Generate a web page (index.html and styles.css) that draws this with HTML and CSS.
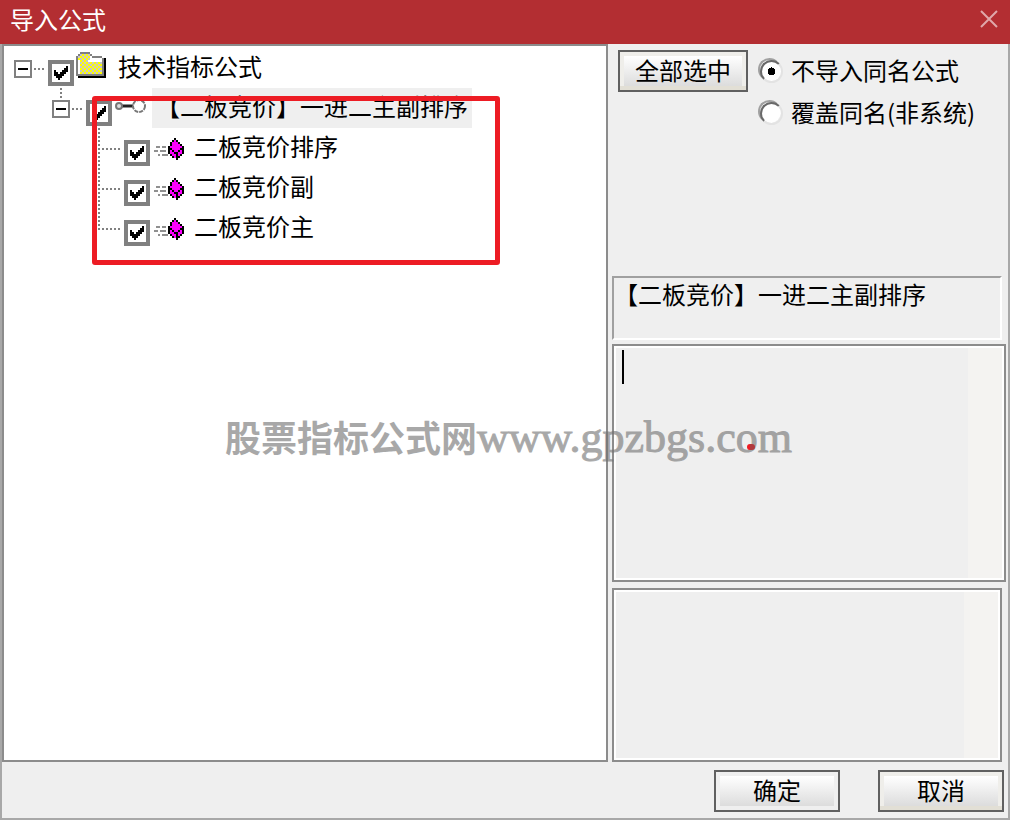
FILE: index.html
```html
<!DOCTYPE html>
<html lang="zh-CN">
<head>
<meta charset="utf-8">
<meta name="viewport" content="width=device-width, initial-scale=1.0">
<title>导入公式</title>
<link rel="stylesheet" href="styles.css">
</head>
<body>
<svg class="defs" width="0" height="0">
  <pattern id="dither" width="4" height="4" patternUnits="userSpaceOnUse">
    <path fill="#ffff00" d="M0 0h4v4H0z"/>
    <path fill="#c8c8c8" d="M0 0h2v2H0zM2 2h2v2H2z"/>
  </pattern>
  <symbol id="cube" viewBox="0 0 40 40">
    <path fill="#909090" d="M6 18h4v2H6zM12 18h4v2h-4zM4 22h4v2H4zM10 22h6v2h-6zM8 26h2v2H8zM12 26h6v2h-6z"/>
    <path fill="#000" d="M24 10h2v2h2v2h2v2h2v2h2v8h-2v2h-2v2h-2v2h-2v-2h-4v-2h-2v-2h-2v-8h2v-4h2v-2h2z"/>
    <path fill="#ff00ff" d="M24 12h2v2h2v2h2v2h2v2h-2v2h-2v2h-4v-2h-2v-2h-2v-2h2v-4h2zM20 22h2v2h2v2h2v4h-2v-2h-2v-2h-2zM30 22h2v4h-2v2h-2v-4h2z"/>
  </symbol>
</svg>

<div class="dialog">
  <div class="titlebar">
    <h1>导入公式</h1>
    <button class="close" aria-label="关闭">
      <svg width="18" height="18"><path d="M1 1l16 16M17 1L1 17" stroke="#e0a8aa" stroke-width="2"/></svg>
    </button>
  </div>

  <div class="main">
    <div class="tree">
      <ul>
        <li>
          <div class="row">
            <button class="branch" aria-label="折叠">
              <svg width="34" height="40">
                <path class="box" d="M1 13h16v16H1z"/>
                <path class="minus" d="M4 21h10"/>
                <path class="dots" d="M20 21h12"/>
              </svg>
            </button>
            <input type="checkbox" id="root" checked>
            <svg class="icon" width="40" height="40">
              <path fill="url(#dither)" d="M6 6h10v6h12v14H4V8h2z"/>
              <path fill="#fff" d="M4 12h2v14H4zM14 12h14v2H14z"/>
              <path fill="#808080" d="M6 4h10v2H6zM4 6h2v2H4zM16 6h2v2h-2zM2 8h2v20H2zM18 8h10v2H18zM28 10h2v18h-2zM2 26h28v2H2z"/>
              <path fill="#000" d="M30 10h2v20H4v-2h26z"/>
            </svg>
            <label for="root">技术指标公式</label>
          </div>
          <ul>
            <li>
              <div class="row">
                <button class="branch" aria-label="折叠">
                  <svg width="34" height="40">
                    <path class="dots" d="M9 0v10"/>
                    <path class="box" d="M1 13h16v16H1z"/>
                    <path class="minus" d="M4 21h10"/>
                    <path class="dots" d="M20 21h12"/>
                  </svg>
                </button>
                <input type="checkbox" id="group" checked>
                <svg class="icon" width="40" height="40">
                  <path d="M9 18h14" stroke="#222" stroke-width="3"/>
                  <circle cx="7" cy="18" r="3" fill="#ddd" stroke="#777" stroke-width="2"/>
                  <circle cx="27" cy="18" r="6" fill="#fff" stroke="#777" stroke-width="2" stroke-dasharray="4 1"/>
                </svg>
                <label class="selected" for="group">【二板竞价】一进二主副排序</label>
              </div>
              <ul>
                <li class="row">
                  <svg class="branch" width="34" height="40"><path class="dots" d="M9 0v40M12 21h20"/></svg>
                  <input type="checkbox" id="sort" checked>
                  <svg class="icon" width="40" height="40"><use href="#cube"/></svg>
                  <label for="sort">二板竞价排序</label>
                </li>
                <li class="row">
                  <svg class="branch" width="34" height="40"><path class="dots" d="M9 0v40M12 21h20"/></svg>
                  <input type="checkbox" id="sub" checked>
                  <svg class="icon" width="40" height="40"><use href="#cube"/></svg>
                  <label for="sub">二板竞价副</label>
                </li>
                <li class="row">
                  <svg class="branch" width="34" height="40"><path class="dots" d="M9 0v22M12 21h20"/></svg>
                  <input type="checkbox" id="primary" checked>
                  <svg class="icon" width="40" height="40"><use href="#cube"/></svg>
                  <label for="primary">二板竞价主</label>
                </li>
              </ul>
            </li>
          </ul>
        </li>
      </ul>
    </div>

    <div class="side">
      <div class="options">
        <button class="btn warm">全部选中</button>
        <div class="radios">
          <label><input type="radio" name="mode" checked>不导入同名公式</label>
          <label><input type="radio" name="mode">覆盖同名(非系统)</label>
        </div>
      </div>
      <div class="name">【二板竞价】一进二主副排序</div>
      <div class="note">
        <textarea aria-label="说明"></textarea>
        <span class="caret"></span>
      </div>
      <div class="note second">
        <textarea aria-label="备注"></textarea>
      </div>
    </div>
  </div>

  <div class="footer">
    <button class="btn">确定</button>
    <button class="btn warm">取消</button>
  </div>

  <div class="frame"></div>
  <div class="watermark">股票指标公式网<span>www.gpzbgs.com</span></div>
  <div class="dot"></div>
</div>
</body>
</html>
```
FILE: styles.css
```css
* {
  margin: 0;
  padding: 0;
  box-sizing: border-box;
}
body {
  background: #efefef;
  color: #000;
  font-family: "Noto Sans CJK SC", sans-serif;
  font-size: 24px;
}
button, input, textarea {
  font: inherit;
  color: inherit;
}
ul {
  list-style: none;
}
.defs {
  position: absolute;
}
.dialog {
  position: relative;
  display: flex;
  flex-direction: column;
  min-height: 100vh;
  border: 2px solid #a8a8a8;
  border-top: 0;
}

/* title */
.titlebar {
  display: flex;
  justify-content: space-between;
  align-items: center;
  height: 44px;
  margin: 0 -2px;
  padding: 0 12px 6px 10px;
  background: #b32e32;
  color: #fff;
}
.titlebar h1 {
  font-size: 24px;
  font-weight: 400;
  line-height: 38px;
}
.close {
  display: flex;
  border: 0;
  background: none;
}

.main {
  flex: 1;
  display: grid;
  grid-template-columns: minmax(0, 1fr) 394px;
  gap: 4px;
  padding-right: 2px;
}

/* tree */
.tree {
  padding: 2px 10px;
  background: #fff;
  border: 2px solid #8c8c8c;
}
.tree ul ul {
  padding-left: 38px;
}
.row {
  display: flex;
  height: 40px;
}
.branch {
  flex: none;
  width: 34px;
  height: 40px;
  border: 0;
  background: none;
}
.branch svg {
  display: block;
}
.box {
  fill: #fff;
  stroke: #808080;
  stroke-width: 2;
}
.minus {
  stroke: #000;
  stroke-width: 2;
}
.dots {
  fill: none;
  stroke: #808080;
  stroke-width: 2;
  stroke-dasharray: 2 2;
}
.row input {
  appearance: none;
  flex: none;
  width: 26px;
  height: 26px;
  margin: 12px 0;
  padding: 2px;
  border: 4px solid #808080;
  background: #fff;
}
.row input:checked::before {
  content: "";
  display: block;
  width: 14px;
  height: 14px;
  background: #000;
  clip-path: polygon(0 4px, 2px 4px, 2px 6px, 4px 6px, 4px 8px, 6px 8px, 6px 6px, 8px 6px, 8px 4px, 10px 4px, 10px 2px, 12px 2px, 12px 0, 14px 0, 14px 6px, 12px 6px, 12px 8px, 10px 8px, 10px 10px, 8px 10px, 8px 12px, 6px 12px, 6px 14px, 4px 14px, 4px 12px, 2px 12px, 2px 10px, 0 10px);
}
.icon {
  flex: none;
  shape-rendering: geometricPrecision;
}
.row label {
  padding: 0 4px;
  line-height: 36px;
  white-space: nowrap;
}
.selected {
  background: #efefef;
}

/* right side */
.side {
  display: flex;
  flex-direction: column;
}
.options {
  display: flex;
  gap: 10px;
  height: 232px;
  padding: 6px;
}
.btn {
  width: 126px;
  height: 42px;
  padding-bottom: 2px;
  border: 2px solid #606060;
  box-shadow: inset 0 0 0 4px #efefef;
  background: linear-gradient(#fff 10%, #dcdcdc 90%);
  line-height: 36px;
}
.warm {
  box-shadow: inset 0 -4px 0 #e2dfd5, inset 0 0 0 4px #efeeea;
}
.options .btn {
  width: 130px;
}
.radios label {
  display: flex;
  align-items: center;
  gap: 10px;
  height: 42px;
  padding-bottom: 4px;
  white-space: nowrap;
}
.radios input {
  appearance: none;
  flex: none;
  width: 23px;
  height: 23px;
  border: 2px solid;
  border-color: #a0a0a0 #fff #fff #a0a0a0;
  border-radius: 50%;
  background: #fff;
}
.radios input::before {
  content: "";
  display: block;
  width: 19px;
  height: 19px;
  border: 2px solid;
  border-color: #696969 #e3e3e3 #e3e3e3 #696969;
  border-radius: 50%;
}
.radios input:checked::before {
  background: radial-gradient(circle, #000 4px, #fff 4px);
}
.name {
  height: 64px;
  margin-right: 4px;
  border: 2px solid;
  border-color: #a0a0a0 #fff #fff #a0a0a0;
  line-height: 32px;
}
.note {
  position: relative;
  flex: 238;
  display: flex;
  margin-top: 4px;
}
.second {
  flex: 174;
  margin: 6px 4px 0 0;
}
.note textarea {
  flex: 1;
  padding: 2px 6px;
  border: 2px solid #8c8c8c;
  box-shadow: inset 0 0 0 2px #fff;
  background: linear-gradient(#f4f3f1, #f4f3f1) right / 36px 100% no-repeat #efefef;
  outline: 0;
  resize: none;
}
.caret {
  position: absolute;
  top: 6px;
  left: 10px;
  width: 2px;
  height: 34px;
  background: #000;
}

.footer {
  display: flex;
  justify-content: flex-end;
  gap: 38px;
  padding: 8px 4px 6px;
}

/* marks on top of the dialog */
.frame {
  position: absolute;
  top: 96px;
  left: 90px;
  width: 408px;
  height: 169px;
  border: 5px solid #ed1c24;
  border-radius: 3px;
  pointer-events: none;
}
.dot {
  position: absolute;
  top: 444px;
  left: 745px;
  width: 8px;
  height: 6px;
  border-radius: 3px;
  background: linear-gradient(90deg, #ed1c24 40%, #b03a3e 40%);
}
.watermark {
  position: absolute;
  top: 406px;
  left: 223px;
  color: #707070;
  font-size: 36px;
  font-weight: 700;
  line-height: 60px;
  opacity: 0.6;
  white-space: nowrap;
  pointer-events: none;
}
.watermark span {
  font-family: "Liberation Serif", serif;
  font-size: 44px;
  font-weight: 400;
  -webkit-text-stroke: 1px #707070;
}
```
